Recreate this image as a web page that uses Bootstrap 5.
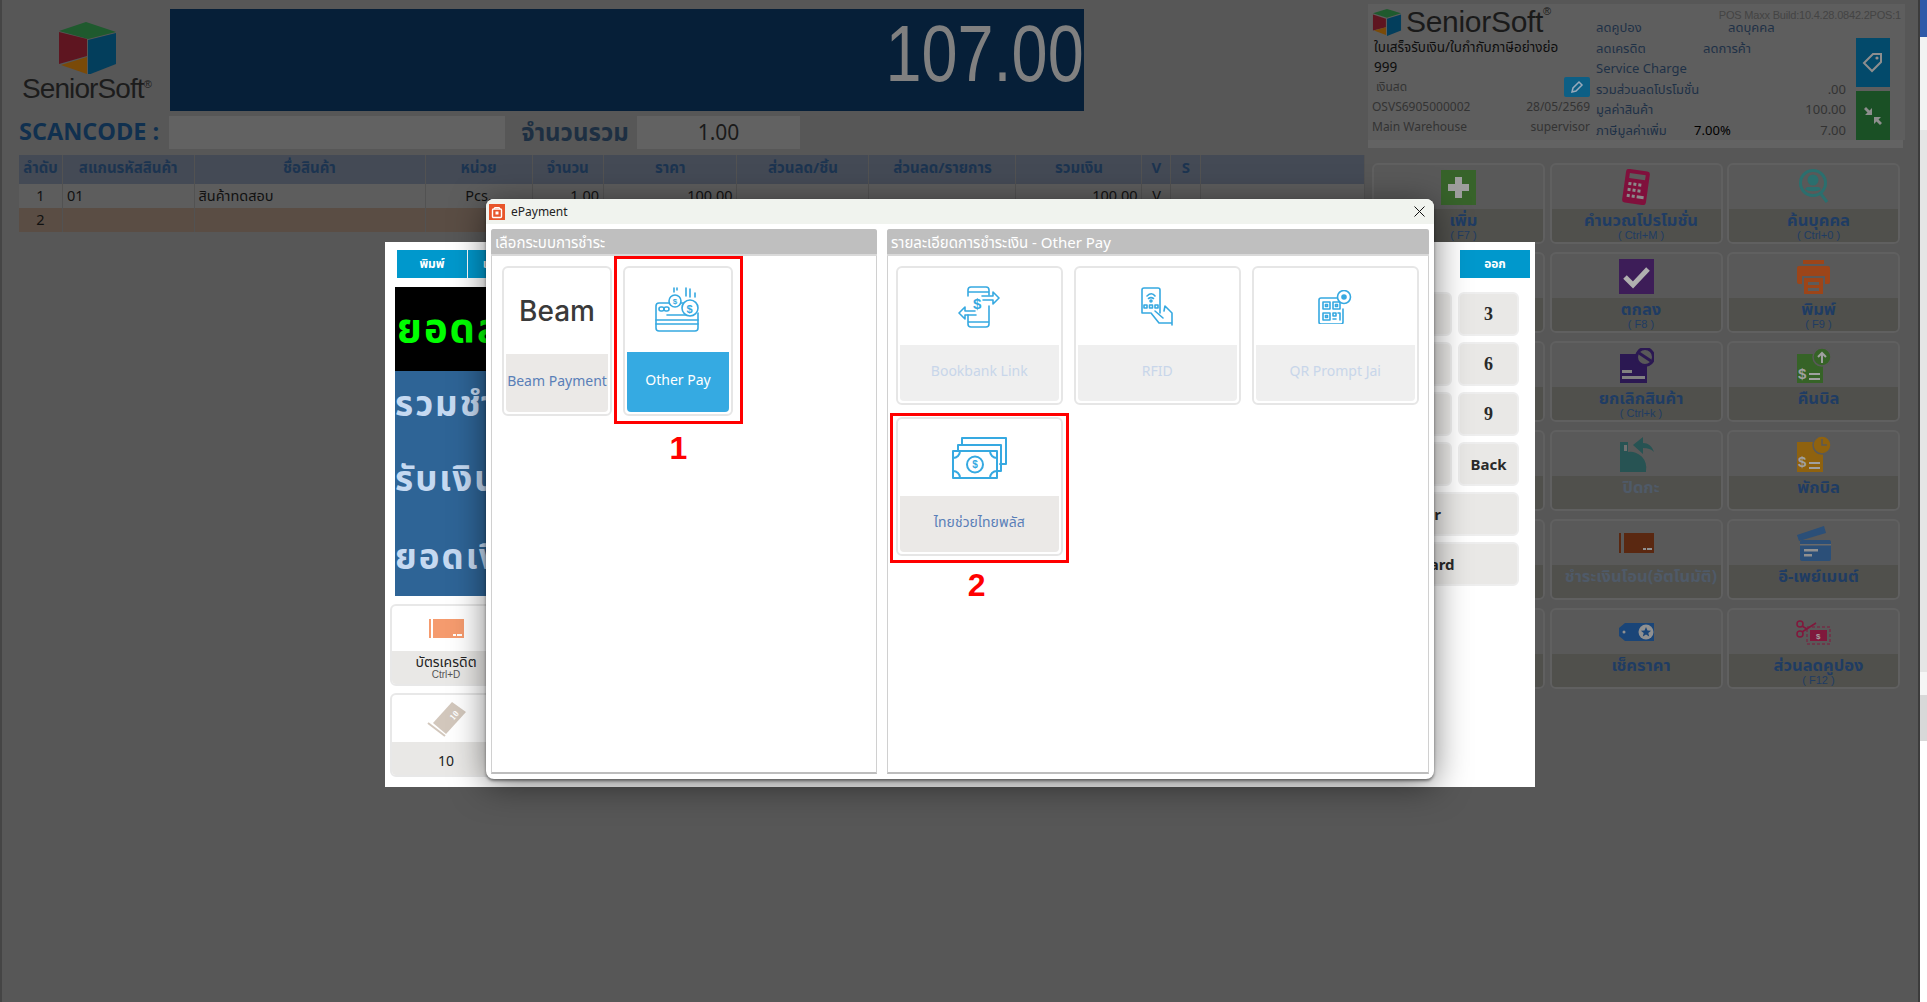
<!DOCTYPE html>
<html lang="th">
<head>
<meta charset="UTF-8">
<title>POS ePayment</title>
<link rel="stylesheet" href="https://cdn.jsdelivr.net/npm/bootstrap@5.3.0/dist/css/bootstrap.min.css">
<style>
html, body { height: 100%; }
body { background: #575757; font-family: "Noto Sans", "Noto Sans Thai", "DejaVu Sans", sans-serif; overflow: hidden; position: relative; border-left: 2px solid #454545; }

/* side strip of the next window */
.edge-strip { position: absolute; top: 0; right: 0; bottom: 0; width: 9px; border-left: 2px solid #3c3c3c; background: linear-gradient(#2f5aa8 37px, #f2f2f2 37px, #f2f2f2 130px, #e5e5e5 130px, #e5e5e5 672px, #f5f5f5 672px, #f5f5f5 695px, #d8d8d8 695px, #d8d8d8 741px, #fff 741px); }

/* POS screen */
.pos-left { width: 1346px; margin-left: 17px; flex: none; }
.pos-right { width: 537px; margin-left: 3px; margin-top: 4px; flex: none; }
.brand-box { width: 151px; height: 102px; padding-top: 20px; }
.brand-box svg { margin-left: 39px; display: block; }
.total-bar { width: 914px; height: 102px; background: #061f38; color: #808080; font: 80px/90px "Liberation Sans", sans-serif; text-align: right; }
.total-bar span { display: inline-block; transform: scaleX(.81); transform-origin: right center; }
.brand-name { font: 28px/1 "Liberation Sans", sans-serif; color: #1c1c1c; margin: 1px 0 0 3px; letter-spacing: -.9px; white-space: nowrap; }
.brand-name sup { font-size: 11px; top: -.9em; }
.scan-line { height: 33px; margin-top: 5px; }
.scan-label { color: #10304f; font-weight: 700; font-size: 23.5px; line-height: 31px; }
.scan-label.code { width: 150px; font-family: "Open Sans", sans-serif; }
.scan-label.qty { width: 132px; color: #1d2f42; text-align: center; font-size: 24px; padding-left: 8px; white-space: nowrap; }
.scan-input { background: #626262; height: 33px; }
.scan-input.code { width: 336px; }
.scan-input.qty { width: 163px; text-align: center; font-size: 21px; line-height: 33px; color: #1a1a1a; }
.sale-table { width: 1346px; margin: 6px 0 0; table-layout: fixed; --bs-table-bg: transparent; --bs-table-border-color: #555; font-size: 14.5px; color: #111; }
.sale-table th, .sale-table td { padding: 0 4px; border: 0; border-right: 1px solid #525252; vertical-align: middle; white-space: nowrap; color: inherit; background: transparent; box-shadow: none; }
.sale-table thead tr { background: #444a55; height: 29px; color: #1c3450; }
.sale-table thead th { font-size: 15px; line-height: 20px; padding-bottom: 6px; overflow: hidden; }
.sale-table tbody tr { background: #5d5d5d; height: 24px; }
.sale-table tbody tr.now-line { background: #5a4d44; }

.info-panel { height: 136px; background: #5e5e5e; position: relative; padding: 3px 4px 0; }
.info-base { height: 8px; width: 535px; background: #636363; margin-bottom: 15px; }
.build-tag { position: absolute; top: 3px; right: 4px; font-size: 11px; letter-spacing: -.2px; color: #444; font-family: "Liberation Sans", sans-serif; }
.info-logo { font: 30px/30px "Liberation Sans", sans-serif; color: #1a1a1a; letter-spacing: -.3px; height: 30px; white-space: nowrap; }
.info-logo sup { font-size: 11px; top: -1em; }
.info-left { width: 218px; font-size: 12px; color: #333; flex: none; }
.info-left div.ln, .info-mid div.ln { height: 20px; line-height: 20px; white-space: nowrap; }
.info-left .dark { color: #0d0d0d; font-size: 13.5px; padding-left: 2px; }
.info-mid { width: 250px; margin-left: 6px; padding-top: 10px; font-size: 13px; color: #1e3147; flex: none; }
.info-mid div.ln { height: 20.5px; line-height: 20.5px; }
.info-side { margin-left: 10px; padding-top: 31px; gap: 4px; }
.side-btn { width: 34px; height: 49px; }
.pencil-btn { width: 26px; height: 20px; background: #0d5f85; border-radius: 2px; }

.fn-grid { display: grid; grid-template-columns: 173px 173px 173px; gap: 8px 4.5px; margin-left: 4px; }
.fn-cell { height: 81px; border: 2px solid #606060; border-radius: 6px; background: #595959; overflow: hidden; text-align: center; }
.fn-icon { height: 44px; }
.fn-strip { height: 33px; background: #50504c; color: #1f3c63; font-weight: 700; font-size: 16.5px; line-height: 19px; padding: 1px 0 0 10px; white-space: nowrap; }
.fn-strip small { display: block; font: 11px/13px "Liberation Sans", sans-serif; }
.fn-strip.off { color: #4f5a68; }

/* pay window behind */
.pay-window { position: absolute; left: 383px; top: 242px; width: 1150px; height: 545px; background: #fff; padding: 8px 5px 0 6px; }
.pay-left { width: 400px; }
.pay-right { width: 350px; }
.tool-btn { width: 70px; height: 28px; background: #0098cc; color: #fff; font-weight: 700; font-size: 12px; line-height: 28px; text-align: center; margin-right: 1px; white-space: nowrap; }
.tool-line { margin-left: 6px; }
.tool-btn.second { width: 62px; }
.tool-btn.quit { align-self: flex-end; margin: 0; }
.sum-black { background: #000; color: #00ff00; height: 84px; margin: 9px 0 0 4px; font-size: 40px; font-weight: 700; line-height: 80px; padding-left: 2px; letter-spacing: 2px; white-space: nowrap; }
.sum-blue { background: #2e6496; color: #c5d9f1; height: 225px; margin-left: 4px; font-size: 35px; font-weight: 700; letter-spacing: 2px; white-space: nowrap; }
.sum-blue div { height: 75px; line-height: 64px; }
.sum-blue div:last-child { line-height: 70px; }
.pay-tile { border: 2px solid #e8e8e8; border-radius: 6px; width: 112px; overflow: hidden; text-align: center; background: #fff; }
.pay-tile .tile-top { height: 45px; }
.pay-tile .tile-foot { background: #e9e8e6; color: #222; font-size: 14px; line-height: 15px; padding-top: 3px; height: 33px; }
.pay-tile .tile-foot small { display: block; font: 10px/11px "Liberation Sans", sans-serif; color: #555; }
.tile-list { margin: 8px 0 0 -1px; gap: 7px; }
.key-grid { display: grid; grid-template-columns: 61px 61px 61px; gap: 6px 6px; justify-content: end; margin: 14px 11px 0 0; }
.pad-key { height: 44px; background: #e9e8e6; border: 2px solid #eeeeee; border-radius: 6px; color: #2a2a2a; font-weight: 700; line-height: 40px; text-align: center; font-size: 15px; white-space: nowrap; }
.pad-key.digit { font-family: "Liberation Serif", serif; font-size: 18px; }
.pad-key.wide { grid-column: 1 / 4; }

/* ePayment dialog */
.epay-modal { position: absolute; left: 484px; top: 199px; width: 948px; height: 580px; background: #fff; border-radius: 8px; box-shadow: 0 2px 3px rgba(0,0,0,.45), 0 6px 34px rgba(0,0,0,.5); }
.epay-title { height: 25px; background: #f0f3ee; border-radius: 8px 8px 0 0; padding: 0 9px 0 3px; font-size: 12px; color: #222; }
.epay-title svg.bag { margin-right: 6px; }
.epay-body { padding: 5px 4px 0 5px; gap: 10px; }
.epay-pane { height: 545px; border: 1px solid #d0d0d0; border-bottom: 2px solid #bdbdbd; border-radius: 3px 3px 0 0; }
.epay-pane.first { width: 386px; }
.epay-pane.second { width: 542px; }
.pane-head { height: 27px; background: #bfbfbf; color: #fff; font-size: 15px; line-height: 27px; padding-left: 4px; border-bottom: 2px solid #d9d9d9; margin: -1px -1px 0; border-radius: 3px 3px 0 0; white-space: nowrap; }
.pane-body.first { padding: 10px 0 0 10px; gap: 11px; }
.pane-body.second { padding: 10px 0 0 8px; display: grid; grid-template-columns: 166.5px 166.5px 166.5px; gap: 12px 11.5px; }
.epay-tile { position: relative; border: 2px solid #e6e6e6; border-radius: 6px; background: #fff; text-align: center; display: flex; flex-direction: column; }
.epay-tile .tile-art { flex: none; display: flex; align-items: center; justify-content: center; }
.epay-tile .tile-name { flex: 1; margin: 0 2px 2px; padding-bottom: 5px; border-radius: 0 0 4px 4px; display: flex; align-items: center; justify-content: center; background: #ebe9e7; color: #5a7fb8; font-size: 14px; white-space: nowrap; }
.tile-small { width: 110px; height: 150px; }
.tile-small .tile-art { height: 86px; }
.tile-small.on .tile-art { height: 84px; }
.tile-small.on .tile-name { background: #35aae2; color: #fff; }
.tile-big { height: 139px; }
.tile-big .tile-art { height: 77px; }
.tile-big.off .tile-name { background: #efefef; color: #c8d6ea; }
.beam-mark { font: 500 28px/1 Inter, sans-serif; color: #3a3a3a; }
.mark-box { position: absolute; border: 3px solid #f00; }
.mark-box.one { inset: -12px -12px -10px -11px; }
.mark-box.two { inset: -6px -8px -9px -8px; }
.mark-num { position: absolute; top: 100%; left: 0; right: 0; text-align: center; color: #f00; font: 700 32px/1 "Liberation Sans", sans-serif; }
.mark-box.one .mark-num { margin-top: 11px; }
.mark-box.two .mark-num { margin-top: 9px; padding-right: 5px; }
.line-art { fill: none; stroke: #36a9e1; stroke-width: 1.6; stroke-linejoin: round; stroke-linecap: round; }
</style>
</head>
<body>

<div class="d-flex">
    <!-- left side of the POS screen -->
    <div class="pos-left">
        <div class="d-flex">
            <div class="brand-box">
                <svg width="60" height="54" viewBox="0 0 60 54">
                    <polygon points="28,2 58,12 30,19 1,11" fill="#1f5a2e"/>
                    <polygon points="1,12 29,19 29,36 1,44" fill="#5e1520"/>
                    <polygon points="58,13 58,44 30,55 30,20" fill="#033e5c"/>
                    <polygon points="3,45 29,37 29,54" fill="#7a4a08"/>
                </svg>
                <div class="brand-name">SeniorSoft<sup>®</sup></div>
            </div>
            <div style="padding-top:9px"><div class="total-bar"><span>107.00</span></div></div>
        </div>
        <div class="d-flex scan-line">
            <div class="scan-label code">SCANCODE :</div>
            <div class="scan-input code"></div>
            <div class="scan-label qty">จำนวนรวม</div>
            <div class="scan-input qty">1.00</div>
        </div>
        <table class="table sale-table">
            <colgroup>
                <col style="width:43.5px"><col style="width:131.5px"><col style="width:231px"><col style="width:107px"><col style="width:71.6px"><col style="width:133.4px"><col style="width:132px"><col style="width:147px"><col style="width:126px"><col style="width:29px"><col style="width:30px"><col>
            </colgroup>
            <thead>
                <tr class="text-center">
                    <th>ลำดับ</th><th>สแกนรหัสสินค้า</th><th>ชื่อสินค้า</th><th>หน่วย</th><th>จำนวน</th><th>ราคา</th><th>ส่วนลด/ชิ้น</th><th>ส่วนลด/รายการ</th><th>รวมเงิน</th><th>V</th><th>S</th><th></th>
                </tr>
            </thead>
            <tbody>
                <tr>
                    <td class="text-center">1</td><td>01</td><td>สินค้าทดสอบ</td><td class="text-center">Pcs.</td><td class="text-end">1.00</td><td class="text-end">100.00</td><td></td><td></td><td class="text-end">100.00</td><td class="text-center">V</td><td></td><td></td>
                </tr>
                <tr class="now-line">
                    <td class="text-center">2</td><td></td><td></td><td></td><td></td><td></td><td></td><td></td><td></td><td></td><td></td><td></td>
                </tr>
            </tbody>
        </table>
    </div>

    <!-- right side: bill info and function keys -->
    <div class="pos-right">
        <div class="info-panel d-flex">
            <div class="build-tag">POS Maxx Build:10.4.28.0842.2POS:1</div>
            <div class="info-left">
                <div class="info-logo d-flex align-items-center">
                    <svg width="30" height="27" viewBox="0 0 26 25" class="me-1">
                        <polygon points="13,0 26,4 13,8 0,4" fill="#1f5a2e"/>
                        <polygon points="0,5 12,9 12,17 0,20" fill="#5e1520"/>
                        <polygon points="26,5 26,20 13,25 13,9" fill="#033e5c"/>
                        <polygon points="1,20 12,17 12,24" fill="#7a4a08"/>
                    </svg>
                    SeniorSoft<sup>®</sup>
                </div>
                <div class="ln dark">ใบเสร็จรับเงิน/ใบกำกับภาษีอย่างย่อ</div>
                <div class="ln dark">999</div>
                <div class="ln d-flex justify-content-between align-items-center">
                    <span class="ps-1">เงินสด</span>
                    <span class="pencil-btn d-flex align-items-center justify-content-center">
                        <svg width="14" height="14" viewBox="0 0 14 14"><path d="M2 12l1-4 6-6 3 3-6 6z" fill="none" stroke="#9ab" stroke-width="1.5"/></svg>
                    </span>
                </div>
                <div class="ln d-flex justify-content-between"><span>OSVS6905000002</span><span>28/05/2569</span></div>
                <div class="ln d-flex justify-content-between"><span>Main Warehouse</span><span>supervisor</span></div>
            </div>
            <div class="info-mid">
                <div class="ln d-flex"><span style="width:132px">ลดคูปอง</span><span>ลดบุคคล</span></div>
                <div class="ln d-flex"><span style="width:107px">ลดเครดิต</span><span>ลดการค้า</span></div>
                <div class="ln">Service Charge</div>
                <div class="ln d-flex justify-content-between"><span>รวมส่วนลดโปรโมชั่น</span><span style="color:#333">.00</span></div>
                <div class="ln d-flex justify-content-between"><span>มูลค่าสินค้า</span><span style="color:#333">100.00</span></div>
                <div class="ln d-flex justify-content-between"><span>ภาษีมูลค่าเพิ่ม <span class="text-black ms-4">7.00%</span></span><span style="color:#333">7.00</span></div>
            </div>
            <div class="info-side d-flex flex-column">
                <div class="side-btn d-flex align-items-center justify-content-center" style="background:#034a6b">
                    <svg width="22" height="22" viewBox="0 0 22 22"><path d="M2 11l9-9h8v8l-9 9z" fill="none" stroke="#8e8e8e" stroke-width="2"/><circle cx="15" cy="6" r="1.6" fill="#8e8e8e"/></svg>
                </div>
                <div class="side-btn d-flex align-items-center justify-content-center" style="background:#1a5025">
                    <svg width="20" height="20" viewBox="0 0 20 20" fill="#8e8e8e"><path d="M9 9H2l2.500-2.500L1 3l2-2 3.500 3.500L9 2zM11 11h7l-2.500 2.500L19 17l-2 2-3.500-3.500L11 18z"/></svg>
                </div>
            </div>
        </div>
        <div class="info-base"></div>

        <div class="fn-grid">
            <div class="fn-cell">
                <div class="fn-icon d-flex align-items-center justify-content-center">
                    <svg width="35" height="35" viewBox="0 0 35 35"><rect width="35" height="35" fill="#37632a"/><path d="M14 7h7v7h7v7h-7v7h-7v-7H7v-7h7z" fill="#9e9e9e"/></svg>
                </div>
                <div class="fn-strip">เพิ่ม<small>( F7 )</small></div>
            </div>
            <div class="fn-cell">
                <div class="fn-icon d-flex align-items-center justify-content-center">
                    <svg width="30" height="36" viewBox="0 0 30 36"><g transform="rotate(8 15 18)"><rect x="3" y="1" width="24" height="34" rx="3" fill="#80103c"/><rect x="7" y="5" width="16" height="5" fill="#5c5c5c"/><g fill="#8a8a8a"><rect x="7" y="14" width="3" height="3"/><rect x="12" y="14" width="3" height="3"/><rect x="17" y="14" width="3" height="3"/><rect x="7" y="20" width="3" height="3"/><rect x="12" y="20" width="3" height="3"/><rect x="17" y="20" width="3" height="3"/><rect x="7" y="26" width="3" height="3"/><rect x="12" y="26" width="3" height="3"/><rect x="17" y="26" width="7" height="3"/></g></g></svg>
                </div>
                <div class="fn-strip">คำนวณโปรโมชั่น<small>( Ctrl+M )</small></div>
            </div>
            <div class="fn-cell">
                <div class="fn-icon d-flex align-items-center justify-content-center">
                    <svg width="32" height="36" viewBox="0 0 32 36"><circle cx="15" cy="14" r="12.500" fill="none" stroke="#2b6f6e" stroke-width="3"/><circle cx="15" cy="11" r="5.500" fill="#2b6f6e"/><path d="M7 20c3 3 13 3 16 0l-2-2H9z" fill="#2b6f6e"/><path d="M23 25l6 8" stroke="#2b6f6e" stroke-width="3"/></svg>
                </div>
                <div class="fn-strip">ค้นบุคคล<small>( Ctrl+0 )</small></div>
            </div>

            <div class="fn-cell"><div class="fn-icon"></div><div class="fn-strip"></div></div>
            <div class="fn-cell">
                <div class="fn-icon d-flex align-items-center justify-content-center">
                    <svg width="35" height="35" viewBox="0 0 35 35"><rect width="35" height="35" fill="#3d1d58"/><path d="M6 18l8 8 15-16" fill="none" stroke="#b0b0b0" stroke-width="5"/></svg>
                </div>
                <div class="fn-strip">ตกลง<small>( F8 )</small></div>
            </div>
            <div class="fn-cell">
                <div class="fn-icon d-flex align-items-center justify-content-center">
                    <svg width="35" height="35" viewBox="0 0 35 35" fill="#9c4519"><rect x="7" y="1" width="21" height="4"/><path d="M3 7h29a2 2 0 0 1 2 2v14a2 2 0 0 1-2 2h-3v-8H6v8H3a2 2 0 0 1-2-2V9a2 2 0 0 1 2-2z"/><path d="M8 19h19v16H8z"/><g fill="#5c5c5c"><rect x="12" y="23" width="11" height="3"/><rect x="12" y="29" width="11" height="3"/></g></svg>
                </div>
                <div class="fn-strip">พิมพ์<small>( F9 )</small></div>
            </div>

            <div class="fn-cell"><div class="fn-icon"></div><div class="fn-strip"></div></div>
            <div class="fn-cell">
                <div class="fn-icon d-flex align-items-center justify-content-center">
                    <svg width="35" height="35" viewBox="0 0 35 35"><path d="M1 6h22l5 5v24H1z" fill="#2b1852"/><rect x="3" y="22" width="10" height="3" fill="#808080"/><rect x="3" y="28" width="23" height="3" fill="#808080"/><circle cx="26" cy="9" r="8.500" fill="#595959" stroke="#2b1852" stroke-width="3"/><path d="M20 5l12 8" stroke="#2b1852" stroke-width="3"/></svg>
                </div>
                <div class="fn-strip">ยกเลิกสินค้า<small>( Ctrl+k )</small></div>
            </div>
            <div class="fn-cell">
                <div class="fn-icon d-flex align-items-center justify-content-center">
                    <svg width="35" height="35" viewBox="0 0 35 35"><path d="M1 6h26v29H1z" fill="#366327"/><circle cx="26" cy="9" r="9" fill="#366327" stroke="#595959" stroke-width="1.500"/><path d="M26 15V6m-4 3l4-4 4 4" fill="none" stroke="#a0a0a0" stroke-width="2"/><text x="2" y="31" font-size="15" font-weight="700" fill="#a0a0a0" font-family="Liberation Sans">$</text><rect x="13" y="25" width="11" height="2" fill="#a0a0a0"/><rect x="13" y="30" width="11" height="2" fill="#a0a0a0"/></svg>
                </div>
                <div class="fn-strip">คืนบิล</div>
            </div>

            <div class="fn-cell"><div class="fn-icon"></div><div class="fn-strip"></div></div>
            <div class="fn-cell">
                <div class="fn-icon d-flex align-items-center justify-content-center">
                    <svg width="35" height="36" viewBox="0 0 35 36" fill="#275353"><path d="M1 6h8v10a16 16 0 0 1 18 19v1H1z"/><rect x="5" y="9" width="3" height="6" fill="#707070"/><path d="M24 1v6c5 0 9 3 11 9-3-3-6-4-11-4v6l-10-9z"/></svg>
                </div>
                <div class="fn-strip off">ปิดกะ</div>
            </div>
            <div class="fn-cell">
                <div class="fn-icon d-flex align-items-center justify-content-center">
                    <svg width="35" height="36" viewBox="0 0 35 36"><path d="M1 6h26v30H1z" fill="#8f620f"/><circle cx="26" cy="9" r="9" fill="#8f620f" stroke="#595959" stroke-width="1.500"/><path d="M26 3v6h5" fill="none" stroke="#595959" stroke-width="1.500"/><text x="2" y="31" font-size="15" font-weight="700" fill="#a0a0a0" font-family="Liberation Sans">$</text><rect x="13" y="26" width="11" height="2" fill="#a0a0a0"/><rect x="13" y="31" width="11" height="2" fill="#a0a0a0"/></svg>
                </div>
                <div class="fn-strip">พักบิล</div>
            </div>

            <div class="fn-cell"><div class="fn-icon"></div><div class="fn-strip"></div></div>
            <div class="fn-cell">
                <div class="fn-icon d-flex align-items-center justify-content-center">
                    <svg width="35" height="20" viewBox="0 0 35 20"><rect width="2" height="20" fill="#5a2811"/><rect x="5" width="30" height="20" fill="#5a2811"/><rect x="24" y="15" width="3" height="2" fill="#909090"/><rect x="28" y="15" width="5" height="2" fill="#909090"/></svg>
                </div>
                <div class="fn-strip off">ชำระเงินโอน(อัตโนมัติ)</div>
            </div>
            <div class="fn-cell">
                <div class="fn-icon d-flex align-items-center justify-content-center">
                    <svg width="35" height="36" viewBox="0 0 35 36"><path d="M1 10L28 1l2 7L3 16z" fill="#2b4f78"/><rect x="4" y="15" width="31" height="21" rx="2" fill="#2b4f78"/><rect x="4" y="19" width="31" height="1.500" fill="#6a6a6a"/><rect x="8" y="24" width="14" height="2.500" fill="#909090"/><rect x="8" y="29" width="8" height="2.500" fill="#909090"/></svg>
                </div>
                <div class="fn-strip">อี-เพย์เมนต์</div>
            </div>

            <div class="fn-cell"><div class="fn-icon"></div><div class="fn-strip"></div></div>
            <div class="fn-cell">
                <div class="fn-icon d-flex align-items-center justify-content-center">
                    <svg width="35" height="18" viewBox="0 0 35 18"><path d="M6 0h29v18H6L0 13V5z" fill="#1a4578"/><circle cx="5" cy="9" r="1.500" fill="#909090"/><circle cx="27" cy="9" r="7.500" fill="#909090"/><path d="M27 4l1.500 3.400 3.600.3-2.800 2.300.9 3.600-3.200-2-3.200 2 .9-3.600-2.800-2.300 3.600-.3z" fill="#1a4578"/></svg>
                </div>
                <div class="fn-strip">เช็คราคา</div>
            </div>
            <div class="fn-cell">
                <div class="fn-icon d-flex align-items-center justify-content-center">
                    <svg width="35" height="26" viewBox="0 0 35 26"><rect x="11" y="8" width="23" height="17" fill="none" stroke="#80183c" stroke-dasharray="3 2"/><rect x="14" y="11" width="17" height="11" fill="#80183c"/><circle cx="4" cy="5" r="3" fill="none" stroke="#80183c" stroke-width="1.500"/><circle cx="4" cy="15" r="3" fill="none" stroke="#80183c" stroke-width="1.500"/><path d="M6 7l5 3M6 13L20 4" stroke="#80183c" stroke-width="1.500"/><text x="20" y="20" font-size="8" font-weight="700" fill="#a0a0a0" font-family="Liberation Sans">$</text></svg>
                </div>
                <div class="fn-strip">ส่วนลดคูปอง<small>( F12 )</small></div>
            </div>
        </div>
    </div>
</div>

<!-- payment window behind the dialog -->
<div class="pay-window d-flex justify-content-between">
    <div class="pay-left">
        <div class="d-flex tool-line">
            <div class="tool-btn">พิมพ์</div>
            <div class="tool-btn second">เคลียร์</div>
        </div>
        <div class="sum-black">ยอดสุทธิ</div>
        <div class="sum-blue">
            <div>รวมชำระ</div>
            <div>รับเงิน</div>
            <div>ยอดเงินทอน</div>
        </div>
        <div class="d-flex flex-column tile-list">
            <div class="pay-tile">
                <div class="tile-top d-flex align-items-center justify-content-center">
                    <svg width="35" height="19" viewBox="0 0 35 19"><rect width="2" height="19" fill="#f59b6e"/><rect x="4" width="31" height="19" fill="#f59b6e"/><rect x="24" y="15" width="3" height="2" fill="#fff"/><rect x="28" y="15" width="5" height="2" fill="#fff"/></svg>
                </div>
                <div class="tile-foot">บัตรเครดิต<small>Ctrl+D</small></div>
            </div>
            <div class="pay-tile">
                <div class="tile-top d-flex align-items-center justify-content-center" style="height:47px">
                    <svg width="42" height="36" viewBox="0 0 42 36"><path d="M27 1l14 10-20 22L8 22z" fill="#d2c7bc"/><path d="M3 22l17 13" stroke="#d2c7bc" stroke-width="2"/><text x="24" y="18" font-size="9" font-weight="700" fill="#fff" font-family="Liberation Serif" transform="rotate(-50 28 14)">10</text></svg>
                </div>
                <div class="tile-foot" style="padding-top:11px;height:33px">10</div>
            </div>
        </div>
    </div>
    <div class="pay-right d-flex flex-column">
        <div class="tool-btn quit">ออก</div>
        <div class="key-grid">
            <div class="pad-key digit"></div><div class="pad-key digit"></div><div class="pad-key digit">3</div>
            <div class="pad-key digit"></div><div class="pad-key digit"></div><div class="pad-key digit">6</div>
            <div class="pad-key digit"></div><div class="pad-key digit"></div><div class="pad-key digit">9</div>
            <div class="pad-key digit"></div><div class="pad-key digit"></div><div class="pad-key">Back</div>
            <div class="pad-key wide">Clear</div>
            <div class="pad-key wide">Gift Card</div>
        </div>
    </div>
</div>

<!-- ePayment dialog -->
<div class="epay-modal">
    <div class="epay-title d-flex align-items-center">
        <svg class="bag" width="16" height="16" viewBox="0 0 16 16"><rect width="16" height="16" fill="#e8552b"/><rect x="3.500" y="5" width="9" height="8.500" rx="1" fill="none" stroke="#fff" stroke-width="1.400"/><rect x="6.500" y="7.500" width="3" height="3" fill="#fff"/><path d="M5.500 5V3.500h5V5" fill="none" stroke="#fff"/></svg>
        <span>ePayment</span>
        <svg class="ms-auto" width="11" height="11" viewBox="0 0 11 11"><path d="M.5.5l10 10M10.500.5l-10 10" stroke="#111" stroke-width="1"/></svg>
    </div>
    <div class="epay-body d-flex">
        <div class="epay-pane first">
            <div class="pane-head">เลือกระบบการชำระ</div>
            <div class="pane-body first d-flex">
                <div class="epay-tile tile-small">
                    <div class="tile-art"><span class="beam-mark">Beam</span></div>
                    <div class="tile-name">Beam Payment</div>
                </div>
                <div class="epay-tile tile-small on">
                    <div class="tile-art">
                        <svg class="line-art" width="46" height="46" viewBox="0 0 46 46">
                            <path d="M30 16H4a3 3 0 0 0-3 3v22a3 3 0 0 0 3 3h36a3 3 0 0 0 3-3V26"/>
                            <path d="M1 33h42M1 37h42M12 28h26"/>
                            <rect x="4" y="20" width="5" height="4" rx="2"/><rect x="9" y="20" width="5" height="4" rx="2"/>
                            <circle cx="20" cy="14" r="6" fill="#fff"/><circle cx="35" cy="21" r="8" fill="#fff"/>
                            <text x="17.700" y="17" font-size="8" font-weight="700" fill="#36a9e1" stroke="none" font-family="Liberation Sans">$</text>
                            <text x="31.500" y="25.500" font-size="11" font-weight="700" fill="#36a9e1" stroke="none" font-family="Liberation Sans">$</text>
                            <path d="M19 1v4M22 1v2M31 1v8M35 2v8M40 6v4"/>
                        </svg>
                    </div>
                    <div class="tile-name">Other Pay</div>
                    <div class="mark-box one"><div class="mark-num">1</div></div>
                </div>
            </div>
        </div>
        <div class="epay-pane second">
            <div class="pane-head">รายละเอียดการชำระเงิน - Other Pay</div>
            <div class="pane-body second">
                <div class="epay-tile tile-big off">
                    <div class="tile-art">
                        <svg class="line-art" width="42" height="42" viewBox="0 0 42 42">
                            <path d="M10 10V4a3 3 0 0 1 3-3h15a3 3 0 0 1 3 3v5M10 29v9a3 3 0 0 0 3 3h15a3 3 0 0 0 3-3V20M10 6h21M10 36h21"/>
                            <path d="M24 10h11V6l6 6-6 6v-4H25"/>
                            <path d="M17 25H7v-4l-6 6 6 6v-4h11"/>
                            <text x="15" y="23" font-size="15" font-weight="700" fill="#36a9e1" stroke="none" font-family="Liberation Sans">$</text>
                        </svg>
                    </div>
                    <div class="tile-name">Bookbank Link</div>
                </div>
                <div class="epay-tile tile-big off">
                    <div class="tile-art">
                        <svg class="line-art" width="32" height="39" viewBox="0 0 32 39">
                            <path d="M19 26V3a2 2 0 0 0-2-2H3a2 2 0 0 0-2 2v23h8"/>
                            <path d="M6 9c3-3 6-3 8 0M7.500 11.500c2-1.500 3-1.500 5 0"/><circle cx="10" cy="14" r="1"/>
                            <rect x="3" y="18" width="3" height="3"/><rect x="8.500" y="18" width="3" height="3"/><rect x="14" y="18" width="3" height="3"/>
                            <path d="M31 38V26l-7-7-1 5M10 26l8 10h13M14 24l8 7"/>
                        </svg>
                    </div>
                    <div class="tile-name">RFID</div>
                </div>
                <div class="epay-tile tile-big off">
                    <div class="tile-art">
                        <svg class="line-art" width="34" height="34" viewBox="0 0 34 34">
                            <path d="M22 8H3a2 2 0 0 0-2 2v22a2 2 0 0 0 2 2h20a2 2 0 0 0 2-2V19"/>
                            <rect x="5" y="12" width="7" height="7"/><rect x="7.500" y="14.500" width="2" height="2"/>
                            <rect x="15" y="12" width="7" height="7"/><rect x="17.500" y="14.500" width="2" height="2"/>
                            <rect x="5" y="23" width="7" height="7"/><rect x="7.500" y="25.500" width="2" height="2"/>
                            <path d="M15 23h3v3h-3zM20 23h2v7M15 29h3"/>
                            <circle cx="26" cy="7" r="6.500" fill="#fff"/><circle cx="26" cy="7" r="2" fill="#36a9e1"/>
                        </svg>
                    </div>
                    <div class="tile-name">QR Prompt Jai</div>
                </div>
                <div class="epay-tile tile-big">
                    <div class="tile-art">
                        <svg class="line-art" width="55" height="42" viewBox="0 0 55 42" style="stroke-width:2">
                            <path d="M10 8V1h44v26h-6M6 14V8h43v26h-5"/>
                            <rect x="1" y="14" width="44" height="27" fill="#fff"/>
                            <circle cx="23" cy="27.500" r="8"/>
                            <path d="M1 21c4 0 7-3 7-7M38 14c0 4 3 7 7 7M1 34c4 0 7 3 7 7M45 34c-4 0-7 3-7 7"/>
                            <text x="20.300" y="31" font-size="10" font-weight="700" fill="#36a9e1" stroke="none" font-family="Liberation Sans">$</text>
                        </svg>
                    </div>
                    <div class="tile-name">ไทยช่วยไทยพลัส</div>
                    <div class="mark-box two"><div class="mark-num">2</div></div>
                </div>
            </div>
        </div>
    </div>
</div>

<div class="edge-strip"></div>

</body>
</html>
